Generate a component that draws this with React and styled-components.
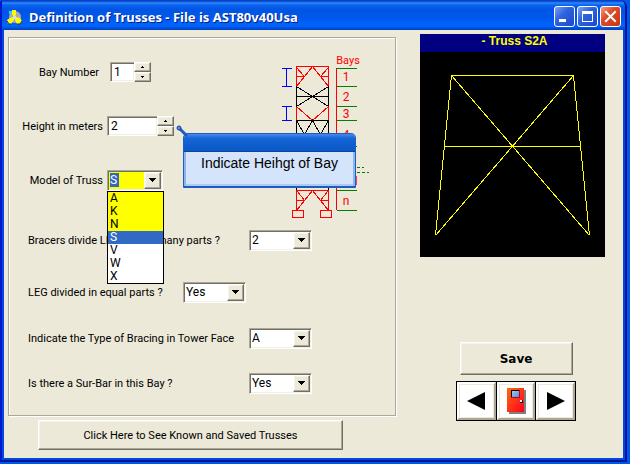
import React, { useState } from 'react';
import styled, { createGlobalStyle, css } from 'styled-components';

const GlobalStyle = createGlobalStyle`
  * { box-sizing: border-box; }
  body {
    margin: 0;
    background: #0056e8;
    font-family: Roboto, "Liberation Sans", sans-serif;
    font-size: 11px;
    color: #000;
  }
  button, input, select { font: inherit; color: inherit; margin: 0; }
`

const raised = css`
  border: 1px solid;
  border-color: #fff #716f64 #716f64 #fff;
  box-shadow: inset -1px -1px 0 #aca899, inset 1px 1px 0 #f6f4ea;
`

const sunken = css`
  border: 1px solid;
  border-color: #aca899 #fff #fff #aca899;
  box-shadow: inset 1px 1px 0 #716f64, inset -1px -1px 0 #f1efe2;
`

const Desktop = styled.div`
  min-height: 100vh;
  display: flex;
  padding: 0 3px 2px 0;
`

const Window = styled.div`
  flex: 1;
  display: flex;
  flex-direction: column;
  background: #0048e0;
  border: solid #001694;
  border-width: 0 2px 2px 2px;
  border-left-color: #0019cf;
  border-radius: 3px 7px 0 0;
  overflow: hidden;
`

const TitleBar = styled.header`
  display: flex;
  align-items: center;
  height: 30px;
  padding: 3px 4px 0 4px;
  background: linear-gradient(#0045d8 0, #0a3fc0 1px, #2c8cff 3px, #0a62ee 5px, #0054e3 10px, #0058ec 18px, #0066ff 26px, #0050dc 28px, #0040c0 30px);
`

const Title = styled.h1`
  flex: 1;
  margin: 0 0 0 7px;
  font: bold 13px "Noto Sans", sans-serif;
  color: #fff;
  text-shadow: 1px 1px 0 #002080;
  white-space: nowrap;
`

const TitleButtons = styled.div`
  display: flex;
  gap: 2px;
`

const TitleButton = styled.button`
  width: 21px;
  height: 21px;
  padding: 0;
  display: flex;
  border: 1px solid #fff;
  border-radius: 3px;
  background: ${props => props.$close
    ? 'linear-gradient(135deg, #f0a084, #dd4a26 40%, #c83810)'
    : 'linear-gradient(135deg, #7ba4f4, #2f63e0 40%, #1c48c8)'};
`

const Body = styled.main`
  flex: 1;
  display: flex;
  gap: 24px;
  margin: 0 2px 2px 2px;
  padding: 4px 18px 8px 4px;
  background: #ece9d8;
`

const LeftColumn = styled.div`
  flex: 1;
  display: flex;
  flex-direction: column;
  gap: 4px;
  padding-top: 3px;
`

const Panel = styled.section`
  border: 1px solid #aca899;
  box-shadow: 1px 1px 0 #fff, inset 1px 1px 0 #fff;
  padding-bottom: 22px;
`

const TopPart = styled.div`
  display: flex;
  justify-content: space-between;
  padding: 16px 23px 0 0;
`

const TopFields = styled.div`
  display: flex;
  flex-direction: column;
  gap: 34px;
  padding-top: 8px;
`

const BottomFields = styled.div`
  display: flex;
  flex-direction: column;
  gap: 25px;
  padding: 10px 0 0 19px;
`

const Row = styled.div`
  display: flex;
  align-items: center;
  height: 20px;
  margin-bottom: ${props => props.$space || 0}px;
`

const Label = styled.label`
  width: ${props => props.$width}px;
  padding-right: ${props => props.$gap || 0}px;
  text-align: ${props => props.$align || 'left'};
  white-space: nowrap;
`

const Anchor = styled.div`
  position: relative;
`

const Spinner = styled.div`
  display: flex;
  width: ${props => props.$width}px;
  height: 20px;
`

const SpinInput = styled.input`
  ${sunken}
  flex: 1;
  min-width: 0;
  border-right: 0;
  padding: 0 3px;
  background: #fff;
  font-size: 12px;
  outline: 0;
`

const SpinButtons = styled.div`
  display: flex;
  flex-direction: column;
  width: 17px;
`

const SpinButton = styled.button`
  ${raised}
  flex: 1;
  display: flex;
  align-items: center;
  justify-content: center;
  padding: 0;
  background: #ece9d8;
`

const ComboBox = styled.div`
  ${sunken}
  position: relative;
  display: flex;
  width: ${props => props.$width || 63}px;
  height: 21px;
  padding: 1px;
  background: ${props => props.$marked ? '#ff0' : '#fff'};
`

const Select = styled.select`
  flex: 1;
  min-width: 0;
  appearance: none;
  border: 0;
  padding: 0 18px 0 1px;
  outline: 0;
  background: transparent;
  font-size: 12px;
  line-height: 15px;
  ${props => props.$marked && css`
    color: #fff;
    background: linear-gradient(#316ac5, #316ac5) 1px 1px / 9px 14px no-repeat;
  `}
`

const Drop = styled.span`
  ${raised}
  position: absolute;
  top: 1px;
  right: 1px;
  bottom: 1px;
  width: 17px;
  display: flex;
  align-items: center;
  justify-content: center;
  background: #ece9d8;
  pointer-events: none;
`

const Options = styled.ul`
  position: absolute;
  top: 21px;
  left: 0;
  z-index: 2;
  width: 57px;
  margin: 0;
  padding: 0;
  list-style: none;
  border: 1px solid #000;
  background: #fff;
`

const Option = styled.li`
  height: 13px;
  padding-left: 2px;
  font-size: 12px;
  line-height: 13px;
  background: ${props => props.$selected ? '#316ac5' : props.$marked ? '#ff0' : '#fff'};
  color: ${props => props.$selected ? '#fff' : '#000'};
`

const Hint = styled.div`
  position: absolute;
  top: 17px;
  left: 76px;
  z-index: 3;
  width: 173px;
  border: 1px solid #1c5cc4;
  border-bottom-width: 2px;
  border-radius: 5px 5px 1px 1px;
  background: #d3e4fb;
  box-shadow: inset 2px 0 0 #8db4ee, inset -2px 0 0 #8db4ee, inset 0 -2px 0 #b0cbf3;
  font: 14px/22px "Liberation Sans", sans-serif;
  text-align: center;
  white-space: nowrap;
  padding-bottom: 12px;

  &::before {
    content: '';
    display: block;
    height: 17px;
    border-radius: 4px 4px 0 0;
    background: linear-gradient(#4a8ae6, #1766d8 4px, #0c5cce 12px, #0d58c4);
    border-bottom: 1px solid #0a459c;
  }
`

const HintPin = styled.svg`
  position: absolute;
  top: 8px;
  left: 68px;
  z-index: 4;
`

const PlainButton = styled.button`
  ${raised}
  background: #ece9d8;
  padding: 0;
`

const KnownButton = styled(PlainButton)`
  align-self: flex-start;
  width: 305px;
  height: 30px;
  margin-left: 30px;
`

const RightColumn = styled.aside`
  display: flex;
  flex-direction: column;
  width: 185px;
`

const Preview = styled.figure`
  margin: 0;
  background: #000;
`

const PreviewTitle = styled.figcaption`
  height: 18px;
  background: #000080;
  color: #ff0;
  font: bold 12px/15px "Liberation Sans", sans-serif;
  text-align: center;
  padding-left: 4px;
`

const Controls = styled.div`
  display: flex;
  flex-direction: column;
  align-items: center;
  gap: 6px;
  margin-top: auto;
  padding: 0 0 29px 7px;
`

const SaveButton = styled(PlainButton)`
  width: 113px;
  height: 33px;
  font: bold 12px "DejaVu Sans", sans-serif;
`

const NavBar = styled.nav`
  display: flex;
  width: 120px;
  background: #000;
  padding: 1px;
  gap: 1px;
`

const NavButton = styled.button`
  flex: 1;
  height: 38px;
  display: flex;
  align-items: center;
  justify-content: center;
  padding: 0;
  background: #fff;
  border: 2px solid;
  border-color: #fff #aca899 #aca899 #fff;
  box-shadow: inset 0 0 0 1px #ece9d8;
`

const Block = styled.svg`
  display: block;
`

function AppIcon() {
  return (
    <Block width="16" height="16" viewBox="0 0 16 16" aria-hidden="true">
      <circle cx="9" cy="8" r="6" fill="#a9a9b4" />
      <path d="M3 2h3v3H3z" fill="#3cf" />
      <path d="M6 1h4v4l-1 3H8L6 5z" fill="#ff0" />
      <path d="M7 8l1 3-3 4H2l-1-4 3-2z" fill="#ff0" />
      <path d="M10 8l4 1 2 3-2 3h-3l-2-4z" fill="#ff0" />
      <path d="M1 12l2 3h2M11 15h3l2-3" fill="none" stroke="#333" />
      <path d="M7 7h3v3H7z" fill="#ddd" />
    </Block>
  )
}

function DownArrow() {
  return (
    <svg width="7" height="4" viewBox="0 0 7 4" shapeRendering="crispEdges" aria-hidden="true">
      <path d="M0 0h7v1H0zM1 1h5v1H1zM2 2h3v1H2zM3 3h1v1H3z" />
    </svg>
  )
}

function SpinField({ id, value, onChange, width }) {
  const step = n => onChange(String(Math.max(1, Number(value) + n)))
  return (
    <Spinner $width={width}>
      <SpinInput id={id} value={value} onChange={e => onChange(e.target.value)} />
      <SpinButtons>
        <SpinButton aria-label="Up" onClick={() => step(1)}>
          <svg width="3" height="2" shapeRendering="crispEdges"><path d="M1 0h1v1H1zM0 1h3v1H0z" /></svg>
        </SpinButton>
        <SpinButton aria-label="Down" onClick={() => step(-1)}>
          <svg width="3" height="2" shapeRendering="crispEdges"><path d="M0 0h3v1H0zM1 1h1v1H1z" /></svg>
        </SpinButton>
      </SpinButtons>
    </Spinner>
  )
}

function SelectField({ id, value, options }) {
  return (
    <ComboBox>
      <Select id={id} defaultValue={value}>
        {options.map(o => <option key={o}>{o}</option>)}
      </Select>
      <Drop><DownArrow /></Drop>
    </ComboBox>
  )
}

function Tower() {
  return (
    <Block width="92" height="166" viewBox="280 54 92 166" fill="none" shapeRendering="crispEdges" role="img" aria-label="Tower bays">
      <g stroke="#00f">
        <path d="M282 68.500h10M282 86.500h10M286.500 68v18M282 106.500h10M282 120.500h10M286.500 106v14" />
      </g>
      <g stroke="#f00">
        <path d="M296 66.500h33M296.500 66v20M328.500 66v20M296.500 106v14M328.500 106v14" />
        <path d="M296.500 86.500l16-20 16 20M296.500 67.500l8 9M328.500 67.500l-8 9M296 76.500h8M320 76.500h9" />
        <path d="M296.500 106.500l16 14 16-14" />
        <path d="M296 190.500h33M296.500 190v20M328.500 190v20M296.500 210.500l16-20 16 20M297.500 191.500l7 9M327.500 191.500l-7 9M296 200.500h8M320 200.500h9" />
        <path d="M292.500 210.500h11v7h-11zM320.500 210.500h11v7h-11z" />
        <path d="M336.500 68v142" />
      </g>
      <g stroke="#000">
        <path d="M296.500 86v20M328.500 86v20M296 96.500h33M296.500 86.500l32 20M328.500 86.500l-32 20" />
        <path d="M296 120.500h33M296.500 120v70M328.500 120v70M296.500 120.500l8 14 8-14 8 14 8-14" />
      </g>
      <g stroke="#008000">
        <path d="M337 68.500h20M337 86.500h20M337 106.500h20M337 120.500h20M337 146.500h20M337 190.500h20M337 210.500h20" />
        <path d="M337 167.500h27M337 172.500h32" strokeDasharray="3 2" />
      </g>
      <g fill="#f00" fontFamily="Roboto, sans-serif" fontSize="12" textAnchor="middle">
        <text x="348" y="64" fontSize="11">Bays</text>
        <text x="346" y="81">1</text>
        <text x="346" y="101">2</text>
        <text x="346" y="118">3</text>
        <text x="346" y="139">4</text>
        <text x="351" y="185">n-1</text>
        <text x="346" y="205">n</text>
      </g>
    </Block>
  )
}

function TrussPreview() {
  return (
    <Block width="100%" height="205" viewBox="420 52 185 205" fill="none" stroke="#ff0" shapeRendering="crispEdges" role="img" aria-label="Truss S2A">
      <path d="M435.500 235.500l16-160h122l16 160M451.500 75.500l138 160M573.500 75.500l-138 160M444 146.500h137" />
    </Block>
  )
}

const models = ['A', 'K', 'N', 'S', 'V', 'W', 'X']

function App() {
  const [bay, setBay] = useState('1')
  const [height, setHeight] = useState('2')
  const [model, setModel] = useState('S')

  return (
    <Desktop>
      <GlobalStyle />
      <Window>
        <TitleBar>
          <AppIcon />
          <Title>Definition of Trusses - File is AST80v40Usa</Title>
          <TitleButtons>
            <TitleButton aria-label="Minimize">
              <svg width="19" height="19"><path d="M4 12h7v3H4z" fill="#fff" /></svg>
            </TitleButton>
            <TitleButton aria-label="Maximize">
              <svg width="19" height="19"><path d="M4 4h11v11H4zM5 7v7h9V7z" fill="#fff" fillRule="evenodd" /></svg>
            </TitleButton>
            <TitleButton $close aria-label="Close">
              <svg width="19" height="19"><path d="M5 5l9 9M14 5l-9 9" stroke="#fff" strokeWidth="2" strokeLinecap="square" /></svg>
            </TitleButton>
          </TitleButtons>
        </TitleBar>

        <Body>
          <LeftColumn>
            <Panel>
              <TopPart>
                <TopFields>
                  <Row>
                    <Label htmlFor="bay" $width={101} $gap={11} $align="right">Bay Number</Label>
                    <SpinField id="bay" value={bay} onChange={setBay} width={41} />
                  </Row>
                  <Row>
                    <Label htmlFor="height" $width={98} $gap={4} $align="right">Height in meters</Label>
                    <Anchor>
                      <SpinField id="height" value={height} onChange={setHeight} width={67} />
                      <HintPin width="14" height="13" aria-hidden="true">
                        <path d="M4 4l8 8" stroke="#1c5cc4" strokeWidth="3" />
                        <circle cx="4" cy="4" r="2" fill="#5a8ed8" stroke="#0d3f94" />
                      </HintPin>
                      <Hint role="tooltip">Indicate Heihgt of Bay</Hint>
                    </Anchor>
                  </Row>
                  <Row>
                    <Label htmlFor="model" $width={98} $gap={4} $align="right">Model of Truss</Label>
                    <Anchor>
                      <ComboBox $width={56} $marked>
                        <Select id="model" $marked value={model} onChange={e => setModel(e.target.value)}>
                          {models.map(m => <option key={m}>{m}</option>)}
                        </Select>
                        <Drop><DownArrow /></Drop>
                      </ComboBox>
                      <Options role="listbox" aria-label="Model of Truss">
                        {models.map((m, i) => (
                          <Option
                            key={m}
                            role="option"
                            aria-selected={m === model}
                            $selected={m === model}
                            $marked={i < 4}
                            onClick={() => setModel(m)}
                          >
                            {m}
                          </Option>
                        ))}
                      </Options>
                    </Anchor>
                  </Row>
                </TopFields>
                <Tower />
              </TopPart>

              <BottomFields>
                <Row $space={7}>
                  <Label htmlFor="parts" $width={221}>Bracers divide LEG in how many parts ?</Label>
                  <SelectField id="parts" value="2" options={['1', '2', '3', '4']} />
                </Row>
                <Row $space={1}>
                  <Label htmlFor="equal" $width={155}>LEG divided in equal parts ?</Label>
                  <SelectField id="equal" value="Yes" options={['Yes', 'No']} />
                </Row>
                <Row>
                  <Label htmlFor="bracing" $width={221}>Indicate the Type of Bracing in Tower Face</Label>
                  <SelectField id="bracing" value="A" options={['A', 'B', 'C']} />
                </Row>
                <Row>
                  <Label htmlFor="surbar" $width={221}>Is there a Sur-Bar in this Bay ?</Label>
                  <SelectField id="surbar" value="Yes" options={['Yes', 'No']} />
                </Row>
              </BottomFields>
            </Panel>
            <KnownButton>Click Here to See Known and Saved Trusses</KnownButton>
          </LeftColumn>

          <RightColumn>
            <Preview>
              <PreviewTitle>- Truss S2A</PreviewTitle>
              <TrussPreview />
            </Preview>
            <Controls>
              <SaveButton>Save</SaveButton>
              <NavBar>
                <NavButton aria-label="Previous">
                  <svg width="18" height="18"><path d="M0 9L18 0v18z" /></svg>
                </NavButton>
                <NavButton aria-label="Exit">
                  <svg width="19" height="26" shapeRendering="crispEdges">
                    <defs>
                      <linearGradient id="door" x1="0" y1="0" x2="1" y2="1">
                        <stop offset="0" stopColor="#ff6a10" />
                        <stop offset="1" stopColor="#ff0020" />
                      </linearGradient>
                      <linearGradient id="glass" x1="0" y1="0" x2="1" y2="1">
                        <stop offset="0" stopColor="#b0c4d8" />
                        <stop offset="1" stopColor="#3c98ff" />
                      </linearGradient>
                    </defs>
                    <path d="M2 2h17v24H2z" fill="#808080" />
                    <path d="M0 0h17v24H0z" fill="url(#door)" />
                    <path d="M4 2h9v8H4z" fill="#c00010" />
                    <path d="M4 2h8v7H4z" />
                    <path d="M5 3h7v6H5z" fill="url(#glass)" />
                    <path d="M13 12h3v3h-3z" />
                    <path d="M13 12h2v2h-2z" fill="#fff" />
                  </svg>
                </NavButton>
                <NavButton aria-label="Next">
                  <svg width="18" height="18"><path d="M18 9L0 0v18z" /></svg>
                </NavButton>
              </NavBar>
            </Controls>
          </RightColumn>
        </Body>
      </Window>
    </Desktop>
  )
}

export default App;
